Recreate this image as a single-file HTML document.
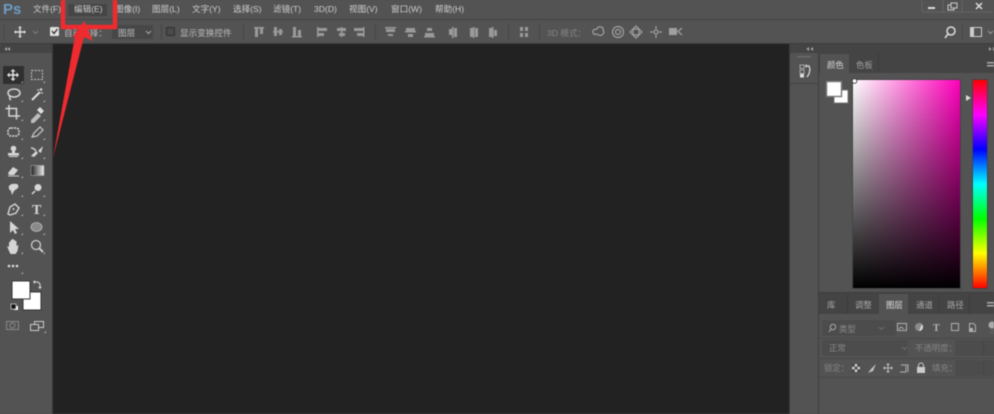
<!DOCTYPE html>
<html><head><meta charset="utf-8"><style>
html,body{margin:0;padding:0;background:#535353}
#p{position:relative;width:994px;height:414px;overflow:hidden;background:#535353;font-family:"Liberation Sans","Noto Sans CJK SC",sans-serif}
#s{position:absolute;left:0;top:0;filter:blur(.55px)}
text{font-family:"Liberation Sans","Noto Sans CJK SC",sans-serif}
.m{font-size:8.6px;fill:#cfcfcf}
.t{font-size:8.6px;fill:#bdbdbd}
.d{font-size:8.6px;fill:#858585}
.ic{fill:none;stroke:#d6d6d6;stroke-width:1.5}
.f{fill:#d6d6d6}
.o{fill:#9a9a9a}
.q{fill:none;stroke:#a0a0a0;stroke-width:1.2}
.h{fill:none;stroke:#7d7d7d;stroke-width:1}
</style></head><body><div id="p">
<svg id="s" width="994" height="414" viewBox="0 0 994 414" xmlns="http://www.w3.org/2000/svg">
<defs>
<linearGradient id="w" x1="0" x2="1" y1="0" y2="0"><stop offset="0" stop-color="#fff"/><stop offset="1" stop-color="#ff00bb"/></linearGradient>
<linearGradient id="k" x1="0" x2="0" y1="0" y2="1"><stop offset="0" stop-color="#000" stop-opacity="0"/><stop offset="1" stop-color="#000"/></linearGradient>
<linearGradient id="hue" x1="0" x2="0" y1="0" y2="1">
<stop offset="0" stop-color="#f00"/><stop offset=".167" stop-color="#f0f"/><stop offset=".333" stop-color="#00f"/><stop offset=".5" stop-color="#0ff"/><stop offset=".667" stop-color="#0f0"/><stop offset=".833" stop-color="#ff0"/><stop offset="1" stop-color="#f00"/>
</linearGradient>
<linearGradient id="g1" x1="0" x2="1" y1="0" y2="0"><stop offset="0" stop-color="#222"/><stop offset="1" stop-color="#eee"/></linearGradient>
</defs>

<rect width="994" height="19" fill="#535353"/>
<rect y="19" width="994" height="1" fill="#444"/>
<rect y="20" width="994" height="23" fill="#535353"/>
<rect y="43" width="994" height="1" fill="#3d3d3d"/>
<rect x="53" y="44" width="736" height="370" fill="#222222"/>
<rect x="0" y="44" width="52" height="370" fill="#535353"/>
<rect x="0" y="44" width="52" height="9" fill="#444"/>
<rect x="52" y="44" width="1" height="370" fill="#3a3a3a"/>
<path d="M7 47l-2.500 2 2.500 2zM10 47l-2.500 2 2.500 2z" fill="#aaa"/>
<rect x="3" y="66" width="21" height="18" rx="1" fill="#2f2f2f"/>

<text x="3" y="14" font-size="15" font-weight="bold" fill="#6d9cc4">Ps</text>
<rect x="68" y="4" width="39" height="12" fill="#454545"/>
<text class="m" x="33" y="12">文件(F)</text>
<text class="m" x="74" y="12">编辑(E)</text>
<text class="m" x="115" y="12">图像(I)</text>
<text class="m" x="152" y="12">图层(L)</text>
<text class="m" x="192" y="12">文字(Y)</text>
<text class="m" x="233" y="12">选择(S)</text>
<text class="m" x="273" y="12">滤镜(T)</text>
<text class="m" x="314" y="12">3D(D)</text>
<text class="m" x="349" y="12">视图(V)</text>
<text class="m" x="391" y="12">窗口(W)</text>
<text class="m" x="435" y="12">帮助(H)</text>

<path d="M922 0v10q0 2 2 2h69" fill="none" stroke="#656565"/>
<path d="M943 0v12M962 0v12" stroke="#656565"/>
<rect x="928" y="7" width="7" height="2" fill="#ddd"/>
<rect x="948" y="5" width="6" height="5" fill="none" stroke="#ccc"/><rect x="951" y="3" width="6" height="5" fill="#535353" stroke="#ccc"/>
<path d="M976 3l6 6M982 3l-6 6" stroke="#ddd" stroke-width="1.500"/>

<path d="M4 24v16" stroke="#474747"/>
<g transform="translate(20,32)"><path d="M-5 0h10M0 -5v10" stroke="#ddd" stroke-width="1.500"/><path d="M-6 0l2-2v4zM6 0l-2-2v4zM0-6l-2 2h4zM0 6l-2-2h4z" fill="#ddd"/></g>
<path d="M33 31l2.500 2.500 2.500-2.500" class="h"/>
<rect x="50" y="27" width="9" height="9" rx="1" fill="#e0e0e0"/>
<path d="M52 31l2 2.500 3.500-4.500" fill="none" stroke="#333" stroke-width="1.400"/>
<text class="t" x="64" y="36">自动选择：</text>
<rect x="112" y="25" width="41" height="14" rx="1" fill="#474747" stroke="#4d4d4d"/>
<text class="t" x="118" y="36">图层</text>
<path d="M146 31l2.500 2.500 2.500-2.500" fill="none" stroke="#aaa"/>
<path d="M161.500 24v16" stroke="#474747"/>
<rect x="166.500" y="27.500" width="8" height="8" rx="1" fill="#4a4a4a" stroke="#2f2f2f"/>
<text class="t" x="180" y="36">显示变换控件</text>
<path d="M243.500 24v16" stroke="#474747"/>
<g class="o">
<rect x="254" y="27" width="10" height="1.500"/><rect x="255" y="28" width="3" height="9"/><rect x="260" y="28" width="3" height="6"/>
<rect x="273" y="31" width="10" height="1.500"/><rect x="274" y="27" width="3" height="9"/><rect x="279" y="29" width="3" height="6"/>
<rect x="292" y="36" width="10" height="1.500"/><rect x="293" y="27" width="3" height="9"/><rect x="298" y="30" width="3" height="6"/>
<rect x="317" y="27" width="1.500" height="10"/><rect x="318" y="28" width="9" height="3"/><rect x="318" y="33" width="6" height="3"/>
<rect x="341" y="27" width="1.500" height="10"/><rect x="337" y="28" width="9" height="3"/><rect x="339" y="33" width="6" height="3"/>
<rect x="363" y="27" width="1.500" height="10"/><rect x="354" y="28" width="9" height="3"/><rect x="357" y="33" width="6" height="3"/>
<rect x="385" y="27" width="11" height="1.500"/><rect x="386" y="29" width="9" height="3"/><rect x="388" y="34" width="5" height="2"/>
<rect x="405" y="31" width="11" height="1.500"/><rect x="406" y="28" width="9" height="3"/><rect x="408" y="34" width="5" height="3"/>
<rect x="424" y="36" width="11" height="1.500"/><rect x="425" y="33" width="9" height="3"/><rect x="427" y="28" width="5" height="3"/>
<rect x="452" y="27" width="1.500" height="11"/><rect x="454" y="28" width="3" height="9"/><rect x="449" y="29" width="3" height="6"/>
<rect x="473" y="27" width="1.500" height="11"/><rect x="470" y="28" width="3" height="9"/><rect x="475" y="28" width="3" height="9"/>
<rect x="492" y="27" width="1.500" height="11"/><rect x="489" y="28" width="3" height="9"/><rect x="494" y="30" width="3" height="6"/>
<rect x="520" y="27" width="3" height="4"/><rect x="525" y="27" width="3" height="4"/><rect x="520" y="33" width="3" height="4"/><rect x="525" y="33" width="3" height="4"/>
</g>
<path d="M375.500 24v16M508.500 24v16M539.500 24v16" stroke="#474747"/>
<text class="d" x="547" y="36">3D 模式：</text>
<g class="q">
<path d="M593 33q-1-4 4-4 1-3 4-2 3 1 2 3 2 3-1 5-3 1-5-1-3 1-4-1z"/>
<circle cx="618" cy="32" r="5.500"/><circle cx="618" cy="32" r="2.500"/>
<path d="M636 26l3 3h-6zM636 38l3-3h-6zM630 32l3-3v6zM642 32l-3-3v6z"/>
<circle cx="656" cy="32" r="2"/><path d="M656 26v3M656 35v3M650 32h3M659 32h3"/>
</g>
<rect x="669" y="28" width="8" height="7" fill="#a0a0a0"/><path d="M682 28l-4 3.500 4 3.500" class="q"/>
<circle cx="951" cy="31" r="4" fill="none" stroke="#ddd" stroke-width="1.500"/><path d="M948 34l-3 4" stroke="#ddd" stroke-width="1.500"/>
<path d="M962.500 24v16" stroke="#474747"/>
<rect x="970.500" y="27.500" width="11" height="9" fill="none" stroke="#ccc"/><rect x="971" y="28" width="3" height="8" fill="#ccc"/>
<path d="M988 31l2.500 2.500 2.500-2.500" fill="none" stroke="#999"/>

<g transform="translate(13,75)"><path d="M-4.500 0h9M0-4.500v9" stroke="#e4e4e4" stroke-width="1.500"/><path d="M-6 0l2.500-2.500v5zM6 0l-2.500-2.500v5zM0-6l-2.500 2.500h5zM0 6l-2.500-2.500h5z" fill="#e4e4e4"/></g>
<rect x="31.500" y="70.500" width="11" height="9" fill="none" stroke="#c8c8c8" stroke-dasharray="2 1.300"/>
<ellipse cx="14" cy="93" rx="6" ry="4" class="ic" stroke-width="1.200"/><path d="M10 96q-1 3 1 4" class="ic"/>
<path d="M32 100l8-8" stroke="#ddd" stroke-width="2"/><path d="M41 88v3M39.500 89.500h3M37 90h2M43 93h-2" stroke="#ddd"/>
<path d="M10 107v11h11M6.500 110.500h11v11" class="ic" transform="translate(-1,-2)" stroke-width="1.800"/>
<path d="M31 120l7-7 3 3-7 7h-3z" fill="#bdbdbd"/><path d="M37 110l3-3 4 4-3 3z" fill="#ddd"/>
<rect x="8" y="128" width="11" height="8" rx="3" fill="none" stroke="#ddd" stroke-width="1.500" stroke-dasharray="2 1"/>
<path d="M32 137l2-4 6-6 3 3-6 6z" fill="none" stroke="#ccc" stroke-width="1.200"/>
<circle cx="13.500" cy="148.500" r="2.800" class="f"/><rect x="12" y="150" width="3" height="3" class="f"/><rect x="8" y="153" width="11" height="2.500" class="f"/><rect x="9" y="156" width="9" height="1" class="f"/>
<path d="M31 156l5-5 2 2-4 4zM38 151l5-5-2 7z" class="f"/><path d="M31 148q3 0 5 3" class="ic" stroke-width="1"/>
<path d="M8 173l5-6 5 3-4 5H9z" class="f"/><path d="M8 176h11" stroke="#ccc"/>
<rect x="31" y="165.500" width="13" height="10" fill="url(#g1)" stroke="#aaa" stroke-width=".6"/>
<path d="M9 186q2-3 8-2 2 1 1 4-3 2-4 3l-2 4-1-4q-3-2-2-5z" class="f"/>
<circle cx="38" cy="187.500" r="3.500" class="f"/><path d="M35 191l-3 3" stroke="#ddd" stroke-width="1.500"/>
<path d="M8 214l2-7 5-3 4 4-3 5-6 2z" fill="none" stroke="#d4d4d4" stroke-width="1.400"/><circle cx="13.500" cy="209" r="1" class="f"/>
<text x="32" y="214" font-size="14" font-weight="bold" fill="#d8d8d8" style="font-family:'Liberation Serif',serif">T</text>
<path d="M10 221v12l3-3 2 4 2-1-2-4h4z" class="f"/>
<ellipse cx="36.500" cy="227" rx="5.500" ry="4.500" fill="#8a8a8a" stroke="#bbb" stroke-width=".8"/>
<path transform="translate(0,4)" d="M9 247l-2-5 2 1v-5h1.500v-2h1.500v-1h1.500v1h1.500v1h1.500v5l2-1-1 6-2 3h-5z" class="f"/>
<circle cx="36" cy="245" r="4.500" fill="none" stroke="#ccc" stroke-width="1.300"/><path d="M39.500 248.500l3.500 3.500" stroke="#ccc" stroke-width="2"/>
<circle cx="9" cy="266" r="1.300" fill="#ddd"/><circle cx="13" cy="266" r="1.300" fill="#ddd"/><circle cx="17" cy="266" r="1.300" fill="#ddd"/>
<g fill="#b5b5b5">
<path d="M23 83v-2l-2 2zM45 83v-2l-2 2zM23 102v-2l-2 2zM45 102v-2l-2 2zM23 121v-2l-2 2zM45 121v-2l-2 2zM23 140v-2l-2 2zM45 140v-2l-2 2zM23 159v-2l-2 2zM45 159v-2l-2 2zM23 178v-2l-2 2zM23 197v-2l-2 2zM45 197v-2l-2 2zM23 216v-2l-2 2zM45 216v-2l-2 2zM23 235v-2l-2 2zM45 235v-2l-2 2zM23 254v-2l-2 2zM45 254v-2l-2 2zM23 274v-2l-2 2zM46 333v-2l-2 2z"/>
</g>
<rect x="23" y="292" width="18" height="18" fill="#fff" stroke="#333" stroke-width="1"/>
<rect x="12" y="281" width="18" height="18" fill="#fff" stroke="#333" stroke-width="1"/>
<path d="M35 282h3l2 2v3" fill="none" stroke="#ddd"/><path d="M35 280v4l-2-2zM38 287h4l-2 2z" fill="#ddd"/>
<rect x="14" y="306" width="4" height="4" fill="#fff"/><rect x="11" y="304" width="5" height="5" fill="#111" stroke="#ccc" stroke-width=".8"/>
<rect x="6.500" y="321.500" width="12" height="8" fill="none" stroke="#8a8a8a"/><circle cx="12.500" cy="325.500" r="2.500" fill="none" stroke="#8a8a8a"/>
<rect x="34.500" y="321.500" width="9" height="6" fill="#535353" stroke="#ccc"/><rect x="30.500" y="324.500" width="8" height="6" fill="#535353" stroke="#ccc"/>

<rect x="789" y="44" width="205" height="370" fill="#535353"/>
<rect x="789" y="44" width="1" height="370" fill="#3a3a3a"/>
<rect x="790" y="44" width="204" height="9" fill="#444"/>
<path d="M809 47l-2.500 2 2.500 2zM813 47l-2.500 2 2.500 2z" fill="#aaa"/>
<path d="M989 47l2.500 2-2.500 2zM993 47l2.500 2-2.500 2z" fill="#aaa"/>
<rect x="818" y="53" width="1" height="361" fill="#3e3e3e"/>
<rect x="790" y="83" width="28" height="1" fill="#424242"/>
<rect x="797" y="56" width="14" height="1.500" fill="#6a6a6a"/>
<rect x="800" y="65" width="4" height="3.500" fill="none" stroke="#bbb" stroke-width=".8"/><rect x="800" y="70" width="4" height="3.500" fill="none" stroke="#bbb" stroke-width=".8"/><rect x="800" y="74" width="4" height="3.500" fill="#ddd"/>
<path d="M806 66h3l1 3-1 5-2 3M806 64.500v3" fill="none" stroke="#ddd" stroke-width="1.200"/>
<rect x="819" y="53" width="175" height="20" fill="#444"/>
<rect x="820" y="54" width="29" height="20" fill="#535353"/>
<rect x="878" y="54" width="1" height="19" fill="#3c3c3c"/>
<text x="827" y="68" font-size="8.400" fill="#d8d8d8">颜色</text>
<text x="856" y="68" font-size="8.400" fill="#a0a0a0">色板</text>
<rect x="987" y="62" width="7" height="1.500" fill="#aaa"/><rect x="987" y="65" width="7" height="1.500" fill="#aaa"/>
<rect x="834" y="90" width="14" height="13" fill="#fff" stroke="#777" stroke-width="1"/>
<rect x="826.500" y="81.500" width="15" height="15" fill="#fff" stroke="#777" stroke-width="1.400"/>
<rect x="852.500" y="79.500" width="108" height="209" fill="#333" stroke="#454545"/>
<rect x="853" y="80" width="107" height="208" fill="url(#w)"/>
<rect x="853" y="80" width="107" height="208" fill="url(#k)"/>
<circle cx="854.500" cy="81" r="2.300" fill="none" stroke="#333" stroke-width="1"/><circle cx="854.500" cy="81" r="1.500" fill="none" stroke="#fff" stroke-width=".7"/>
<path d="M966 95l5 3-5 3z" fill="#ddd"/>
<rect x="972.500" y="79.500" width="15" height="209" fill="none" stroke="#444"/>
<rect x="973" y="80" width="14" height="208" fill="url(#hue)"/>
<rect x="819" y="292" width="175" height="1" fill="#3e3e3e"/>
<rect x="819" y="293" width="175" height="21" fill="#444"/>
<rect x="879" y="294" width="29" height="21" fill="#535353"/>
<path d="M847.500 294v20M938.500 294v20M969.500 294v20" stroke="#3b3b3b"/>
<text x="827" y="308" font-size="8.400" fill="#a8a8a8">库</text>
<text x="855" y="308" font-size="8.400" fill="#a8a8a8">调整</text>
<text x="886" y="308" font-size="8.400" fill="#e0e0e0">图层</text>
<text x="916" y="308" font-size="8.400" fill="#a8a8a8">通道</text>
<text x="947" y="308" font-size="8.400" fill="#a8a8a8">路径</text>
<rect x="987" y="302" width="7" height="1.500" fill="#aaa"/><rect x="987" y="305" width="7" height="1.500" fill="#aaa"/>
<rect x="823" y="321" width="72" height="14" rx="1" fill="#4c4c4c" stroke="#4a4a4a"/>
<circle cx="833" cy="327" r="2.700" fill="none" stroke="#aaa"/><path d="M831 329l-2 3" stroke="#aaa"/>
<text x="839" y="332" font-size="8.400" fill="#8a8a8a">类型</text>
<path d="M879 327l2.500 2.500 2.500-2.500" fill="none" stroke="#6b6b6b"/>
<rect x="897.500" y="323.500" width="9" height="7" fill="none" stroke="#b0b0b0"/><path d="M899 329l2-2 3 2" stroke="#b0b0b0" fill="none"/>
<circle cx="919" cy="327" r="4" fill="#8a8a8a"/><path d="M919 331a4 4 0 0 0 0-8l3 1z" fill="#ddd"/>
<text x="933" y="331" font-size="10" font-weight="bold" fill="#b8b8b8" style="font-family:'Liberation Serif',serif">T</text>
<rect x="951.500" y="323.500" width="7" height="7" fill="none" stroke="#b0b0b0"/>
<path d="M969.500 323.500h4l2 2v6h-6z" fill="none" stroke="#b0b0b0"/><rect x="969" y="328" width="4" height="4" fill="#b0b0b0"/>
<circle cx="992" cy="325" r="3.500" fill="#aaa"/><rect x="990" y="329" width="4" height="5" fill="#5b5b5b"/>
<rect x="819" y="338" width="175" height="1" fill="#484848"/>
<rect x="823" y="341" width="84" height="14" rx="1" fill="#4c4c4c" stroke="#4a4a4a"/>
<text x="829" y="351" font-size="8.400" fill="#888">正常</text>
<path d="M902 347l2.500 2.500 2.500-2.500" fill="none" stroke="#6b6b6b"/>
<text x="915" y="351" font-size="8.400" fill="#858585">不透明度：</text>
<rect x="956" y="341" width="38" height="14" fill="#4c4c4c" stroke="#4a4a4a"/><path d="M983.500 341v14" stroke="#454545"/>
<rect x="819" y="358" width="175" height="1" fill="#484848"/>
<text x="824" y="371" font-size="8.400" fill="#858585">锁定：</text>
<rect x="852" y="364" width="8" height="8" fill="#ccc"/><path d="M852 364h2.700v2.700h-2.700zM857.300 364h2.700v2.700h-2.700zM854.700 366.700h2.700v2.700h-2.700zM852 369.400h2.700v2.700h-2.700zM857.300 369.400h2.700v2.700h-2.700z" fill="#444"/>
<path d="M868 373l3-4 5-5-3 7z" fill="#c2c2c2"/>
<path d="M884 368h8M888 364v8" stroke="#bbb"/><path d="M883 368l2-2v4zM893 368l-2-2v4zM888 363l-2 2h4zM888 373l-2-2h4z" fill="#bbb"/>
<path d="M901 365h7v7M900 372h6v-6" fill="none" stroke="#b0b0b0"/>
<rect x="917" y="367" width="8" height="6" fill="#ccc"/><path d="M918.500 367v-1.500a2.500 2.500 0 0 1 5 0v1.500" fill="none" stroke="#ccc"/>
<text x="932" y="371" font-size="8.400" fill="#858585">填充：</text>
<rect x="956" y="361" width="38" height="14" fill="#4c4c4c" stroke="#4a4a4a"/><path d="M983.500 361v14" stroke="#454545"/>
<rect x="819" y="377" width="175" height="1" fill="#484848"/>

<rect x="63" y="-4" width="52" height="31" fill="none" stroke="#ee2b2f" stroke-width="4.500"/>
<path d="M84 21L93 41 84 37 53 158 75 36 72 38Z" fill="#ee2b2f"/>
</svg>
</div></body></html>
